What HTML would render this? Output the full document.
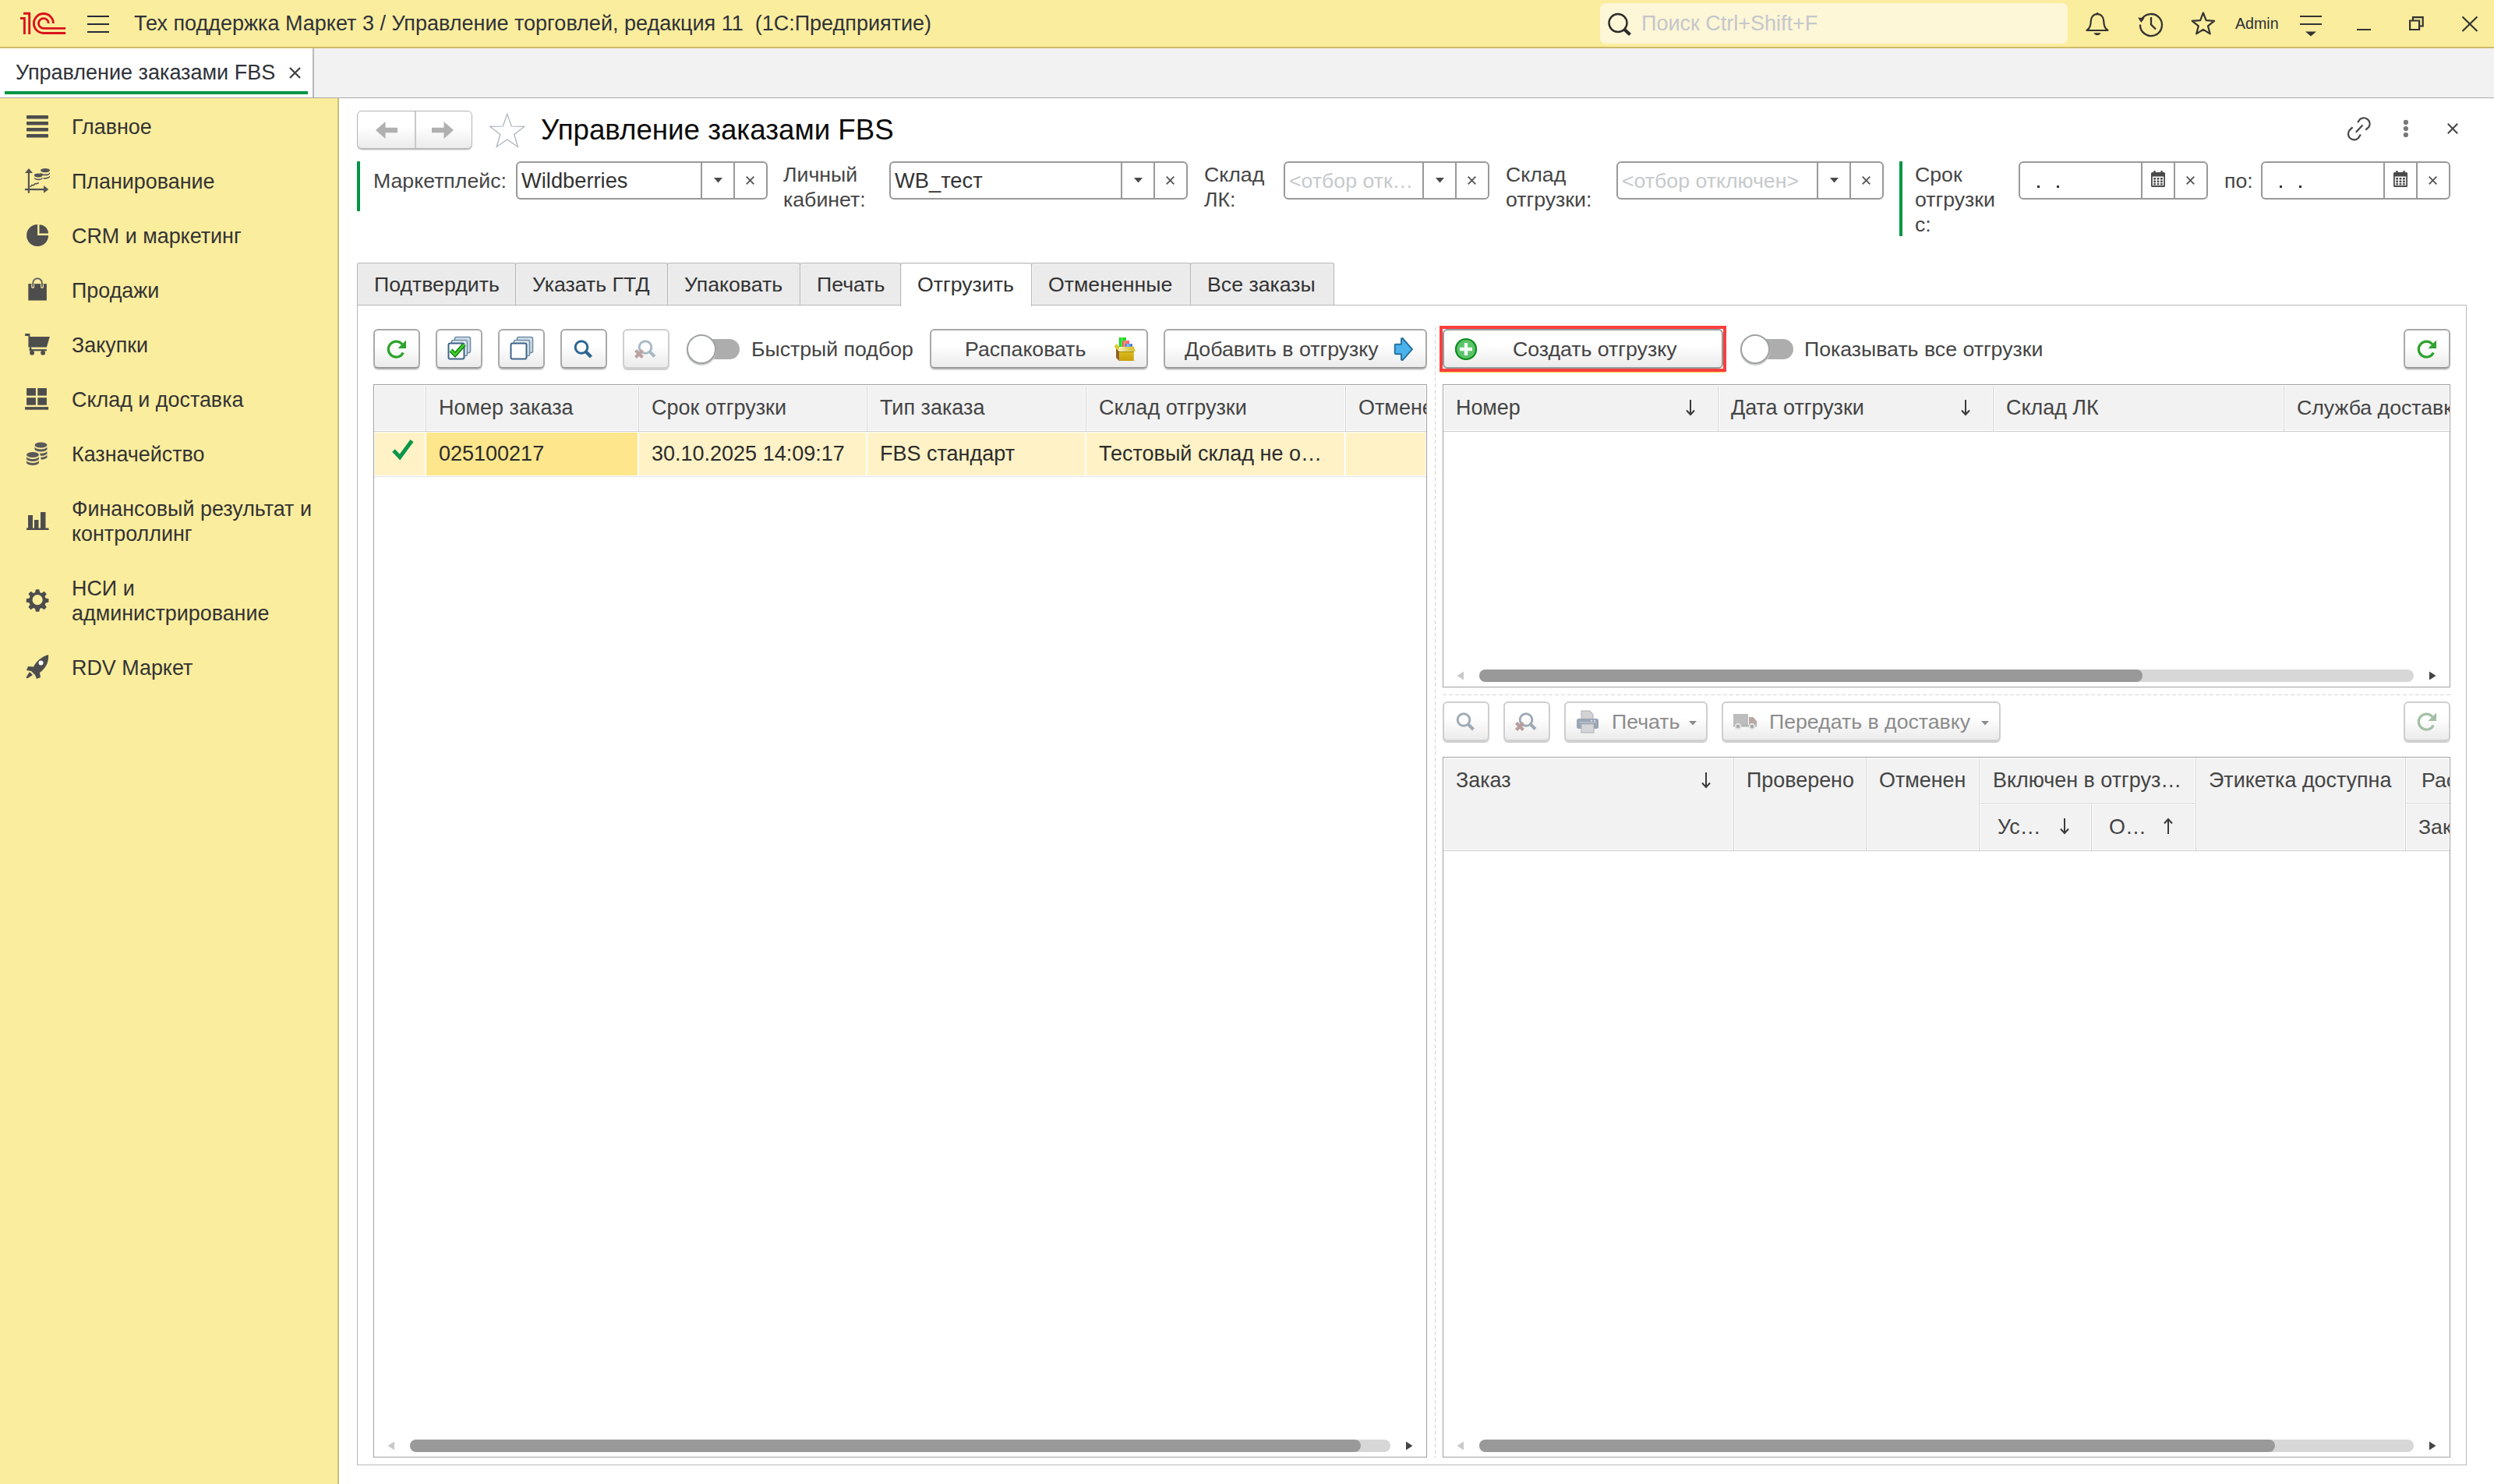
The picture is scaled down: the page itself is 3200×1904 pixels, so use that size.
<!DOCTYPE html>
<html lang="ru">
<head>
<meta charset="utf-8">
<title>Управление заказами FBS</title>
<style>
*{box-sizing:border-box}
html,body{margin:0;padding:0;overflow:hidden}
body{width:3200px;height:1904px;overflow:hidden;position:relative;background:#fff;font-family:"Liberation Sans",sans-serif;font-size:26.7px;color:#333;line-height:32px}
.a{position:absolute}
.t{position:absolute;white-space:nowrap;line-height:32px}
svg{position:absolute;overflow:visible}
#titlebar{left:0;top:0;width:3200px;height:60px;background:#fbed9e}
#titleline{left:0;top:60px;width:3200px;height:2px;background:#cdbb6a}
#tabbar{left:0;top:62px;width:3200px;height:63px;background:#f2f2f2}
#tabbarline{left:0;top:125px;width:3200px;height:1px;background:#a9a9a9}
#sidebar{left:0;top:126px;width:435px;height:1778px;background:#fbed9e;border-right:2px solid #cdbf78}
.nav{position:absolute;left:92px;white-space:nowrap;line-height:32px;color:#333;font-size:26.9px;margin-top:1px}
.btn{position:absolute;height:51px;border:2px solid #a9a9a9;border-bottom-color:#969696;border-radius:6px;background:linear-gradient(#ffffff,#ffffff 40%,#ebebeb);box-shadow:0 2px 0 #d4d4d4}
.btn.dis{border-color:#cecece;box-shadow:0 2px 0 #d0d0d0;color:#9a9a9a}
.inp{position:absolute;height:49px;border:2px solid #999;border-radius:6px;background:#fff}
.inp i{position:absolute;top:0;width:2px;height:45px;background:#999}
.ph{color:#c6c9cc}
.tab{position:absolute;top:337px;height:54px;border:1px solid #b4b4b4;box-shadow:inset 1px 1px 0 #f1f1f1;border-bottom:none;background:#ebebeb;border-radius:3px 3px 0 0}
.grid{position:absolute;border:1px solid #a0a0a0;background:#fff}
.hd{position:absolute;background:#f2f2f2}
.vl{position:absolute;width:3px;background:#cdcdcd;border-left:1px solid #fff;border-right:1px solid #fff}
.hl{position:absolute;height:3px;background:#cdcdcd;border-top:1px solid #fff;border-bottom:1px solid #fff}
.sbtrack{position:absolute;height:16px;border-radius:8px;background:#d7d7d7}
.sbthumb{position:absolute;height:16px;border-radius:8px;background:#999}
.tog{position:absolute;width:68px;height:36px}
.tog b{position:absolute;left:10px;top:6px;width:58px;height:26px;border-radius:13px;background:#adadad}
.tog u{position:absolute;left:0;top:0;width:38px;height:38px;border-radius:19px;background:#fff;border:2px solid #9da2a1;box-shadow:0 2px 1px #cfcfcf}
</style>
</head>
<body>
<!-- TITLE BAR -->
<div class="a" id="titlebar"></div>
<div class="a" id="titleline"></div>
<div class="a" id="tabbar"></div>
<div class="a" id="tabbarline"></div>
<div class="a" id="sidebar"></div>
<!-- 1C logo -->
<svg class="a" style="left:0;top:0" width="170" height="60" viewBox="0 0 170 60" fill="none" stroke="#d9131c" stroke-width="2.9">
<path d="M26 23.5H31.4V43.9"/>
<path d="M30 17.3H37.7V43.9"/>
<path d="M68.4 30A12.5 12.5 0 1 0 55.9 42.5H84.1"/>
<path d="M62.3 30A6.4 6.4 0 1 0 55.9 36.4H84.1"/>
</svg>
<div class="a" style="left:112px;top:20px;width:28px;height:2px;background:#252a35"></div>
<div class="a" style="left:112px;top:30px;width:28px;height:2px;background:#252a35"></div>
<div class="a" style="left:112px;top:40px;width:28px;height:2px;background:#252a35"></div>
<div class="t" style="left:172px;top:14px;font-size:27px;color:#2f3238;white-space:pre">Тех поддержка Маркет 3 / Управление торговлей, редакция 11  (1С:Предприятие)</div>
<!-- search -->
<div class="a" style="left:2053px;top:4px;width:600px;height:52px;border-radius:7px;background:#fdf6d7"></div>
<svg class="a" style="left:2060px;top:14px" width="36" height="36" viewBox="0 0 36 36" fill="none" stroke="#2b2b2b"><circle cx="16" cy="15.5" r="11.5" stroke-width="2.4"/><path d="M24.5 24l7 6.5" stroke-width="4.2"/></svg>
<div class="t" style="left:2106px;top:14px;font-size:27px;color:#c4c7cb">Поиск Ctrl+Shift+F</div>
<!-- bell -->
<svg class="a" style="left:2675px;top:14px" width="32" height="34" viewBox="0 0 32 34" fill="none" stroke="#333" stroke-width="2.2" stroke-linejoin="round">
<path d="M16 4.2c-5.2 0-8.3 4-8.3 9.2 0 5.800-2.200 9.500-5.200 11.600h27c-3-2.100-5.200-5.800-5.200-11.600 0-5.200-3.100-9.200-8.300-9.200z"/>
<circle cx="16" cy="3.200" r="1.300" fill="#333" stroke="none"/>
<path d="M11.500 28.300c1 2.200 2.600 3 4.500 3s3.500-.8 4.500-3z" fill="#333" stroke="none"/>
</svg>
<!-- history -->
<svg class="a" style="left:2742px;top:13px" width="36" height="36" viewBox="0 0 36 36" fill="none" stroke="#333" stroke-width="2.3">
<path d="M5.600 12.500A14 14 0 1 1 4 18.500"/>
<path d="M1.200 9.500l8.300 .800-4.200 5.700z" fill="#333" stroke="none"/>
<path d="M18 9v9.500l6 6" stroke-width="2.300"/>
</svg>
<!-- star -->
<svg class="a" style="left:2810px;top:13px" width="34" height="34" viewBox="0 0 34 34" fill="none" stroke="#333" stroke-width="2.200" stroke-linejoin="round"><path d="M16.90 3.50L20.66 13.22L31.07 13.80L22.99 20.38L25.66 30.45L16.90 24.80L8.14 30.45L10.81 20.38L2.73 13.80L13.14 13.22z"/></svg>
<div class="t" style="left:2868px;top:14px;font-size:19.600px;color:#2b2f36">Admin</div>
<!-- settings lines -->
<div class="a" style="left:2951px;top:20px;width:28px;height:2px;background:#333"></div>
<div class="a" style="left:2951px;top:30px;width:28px;height:2px;background:#333"></div>
<svg class="a" style="left:2957px;top:40px" width="16" height="8" viewBox="0 0 16 8"><path d="M1 .5h14l-7 6z" fill="#333"/></svg>
<!-- window buttons -->
<div class="a" style="left:3024px;top:37px;width:18px;height:2px;background:#333"></div>
<svg class="a" style="left:3090px;top:20px" width="22" height="20" viewBox="0 0 22 20" fill="none" stroke="#333" stroke-width="2.2"><path d="M2.100 6.500h12v11.500h-12z"/><path d="M6 6.500v-4.300h12.700v11.300h-4.600"/></svg>
<svg class="a" style="left:3158px;top:20px" width="22" height="22" viewBox="0 0 22 22" fill="none" stroke="#333" stroke-width="2.2"><path d="M1.500 1.500l19 18.500M20.500 1.500l-19 18.500"/></svg>
<!-- open tab -->
<div class="a" style="left:0;top:62px;width:403px;height:63px;background:#fff;border-right:2px solid #b8b8b8"></div>
<div class="t" style="left:20px;top:77px;font-size:27px;color:#2f3238">Управление заказами FBS</div>
<svg class="a" style="left:371px;top:86px" width="15" height="15" viewBox="0 0 15 15" stroke="#444" stroke-width="2.400" fill="none"><path d="M1 1l13 13M14 1L1 14"/></svg>
<div class="a" style="left:6px;top:117px;width:389px;height:4px;background:#009646"></div>

<!-- sidebar icons -->
<svg class="a" style="left:32px;top:146px" width="32" height="32" viewBox="0 0 32 32" fill="#4d4d4d"><rect x="2" y="2" width="28" height="4.500" rx="1"/><rect x="2" y="10" width="28" height="4.500" rx="1"/><rect x="2" y="18" width="28" height="4.500" rx="1"/><rect x="2" y="26" width="28" height="4.500" rx="1"/></svg>
<svg class="a" style="left:32px;top:216px" width="32" height="32" viewBox="0 0 32 32" fill="#545454" stroke="none">
<rect x="3.800" y="3" width="2.200" height="28.700"/><path d="M0 5.900h10l-5-5.900z"/>
<rect x="0" y="25.900" width="26" height="2.300"/><path d="M24 22.100l6.300 4.900-6.300 4.700z"/>
<path d="M6.500 24l2.600-2.600 1.900.3 2.200-2.100 1.900.2 2.700-1.300" fill="none" stroke="#545454" stroke-width="1.500"/>
<ellipse cx="26" cy="2.600" rx="6" ry="2.600"/><path d="M20 5.200c.8 1.600 3.200 2.300 6 2.300s5.200-.7 6-2.300v1.700c-.8 1.600-3.200 2.300-6 2.300s-5.200-.7-6-2.300z"/><path d="M23.500 11.900c3.300.5 7.400-.2 8.500-2.300v1.700c-1.100 1.900-5 2.700-8.500 2.300z"/>
<ellipse cx="17.300" cy="9" rx="5.300" ry="2.400"/><path d="M12 11.500c.8 1.500 2.900 2.100 5.300 2.100s4.500-.6 5.300-2.100v1.600c-.8 1.500-2.900 2.100-5.300 2.100s-4.500-.6-5.300-2.100z"/>
</svg>
<svg class="a" style="left:32px;top:286px" width="32" height="32" viewBox="0 0 32 32" fill="#4f4f4f"><path d="M16.100 16V2A14 14 0 1 0 30.100 16z"/><path d="M18.500 13.600V2.200A11.600 11.600 0 0 1 30 13.600z"/></svg>
<svg class="a" style="left:32px;top:356px" width="32" height="32" viewBox="0 0 32 32"><rect x="4.300" y="8.100" width="23.600" height="21.400" fill="#4d4d4d"/><rect x="8.200" y="7.500" width="3.900" height="6.300" rx="1.900" fill="#fbed9e"/><rect x="20.100" y="7.500" width="3.900" height="6.300" rx="1.900" fill="#fbed9e"/><path d="M10.200 12.300V7.200a5.900 5.900 0 0 1 11.800 0v5.100" fill="none" stroke="#666" stroke-width="2"/></svg>
<svg class="a" style="left:32px;top:426px" width="32" height="32" viewBox="0 0 32 32" fill="#4d4d4d"><path d="M.1 2h6.300v3.900h25.400l-3.900 13.600h-23.500v-14.500h-4.300z"/><rect x="5.800" y="19.500" width="2.600" height="4.800"/><rect x="5.800" y="22.100" width="22.100" height="2.200"/><circle cx="9.100" cy="26.700" r="2.900"/><circle cx="23.100" cy="26.700" r="2.900"/></svg>
<svg class="a" style="left:32px;top:496px" width="32" height="32" viewBox="0 0 32 32" fill="#4d4d4d"><rect x="2.100" y="2" width="11.800" height="9.600"/><rect x="16.300" y="2" width="11.600" height="9.600"/><rect x="2.100" y="14.200" width="11.800" height="9.500"/><rect x="16.300" y="14.200" width="11.600" height="9.500"/><rect x=".100" y="26.100" width="30" height="3.600"/></svg>
<svg class="a" style="left:32px;top:566px" width="32" height="32" viewBox="0 0 32 32" fill="#5a5a5a">
<ellipse cx="20.500" cy="5" rx="8" ry="3.500"/><path d="M12.500 7.500c1.500 2.300 4.500 3 8 3s6.500-.7 8-3v3c-1.500 2.300-4.500 3-8 3s-6.500-.7-8-3z"/><path d="M19 15.500c3.500.6 8-.3 9.500-2.500v3c-1.200 2-4.500 3-8.500 2.800z"/><path d="M20.500 20.500c3.500 0 6.500-.8 8-2.800v3c-1.300 2-4.500 2.900-8 2.800z"/>
<ellipse cx="10" cy="17.500" rx="8" ry="3.500"/><path d="M2 20c1.500 2.300 4.500 3 8 3s6.500-.7 8-3v3c-1.500 2.300-4.500 3-8 3s-6.500-.7-8-3z"/><path d="M2 25c1.500 2.300 4.500 3 8 3s6.500-.7 8-3v3c-1.500 2.300-4.500 3-8 3s-6.500-.7-8-3z"/>
</svg>
<svg class="a" style="left:32px;top:652px" width="32" height="32" viewBox="0 0 32 32" fill="#4d4d4d"><rect x="4" y="9" width="6" height="17"/><rect x="12" y="15" width="5.500" height="11"/><rect x="20" y="5" width="6.500" height="21"/><rect x="2" y="25.500" width="28.500" height="2.500"/></svg>
<svg class="a" style="left:32px;top:754px" width="32" height="32" viewBox="0 0 32 32" fill="#4d4d4d"><path fill-rule="evenodd" d="M13.500 1.500h5l.8 4.200 2.600 1.100 3.600-2.400 3.500 3.500-2.400 3.600 1.100 2.600 4.200.8v5l-4.200.8-1.100 2.600 2.400 3.600-3.500 3.500-3.600-2.400-2.600 1.100-.8 4.200h-5l-.8-4.200-2.600-1.100-3.600 2.400-3.500-3.500 2.400-3.600-1.100-2.600-4.200-.8v-5l4.200-.8 1.100-2.600-2.400-3.600 3.500-3.500 3.600 2.400 2.600-1.100zM16 9.200a7.300 7.300 0 1 0 0 14.600 7.300 7.300 0 0 0 0-14.600z" transform="translate(1.700 .800) scale(.9)"/></svg>
<svg class="a" style="left:32px;top:840px" width="32" height="32" viewBox="0 0 32 32" fill="#4d4d4d"><path d="M30 0c1 9-3 17-11 23l1 6-5 2-2-5-5-5-6-1 2-5 7 .5c4-8 11-13 19-15.500z"/><path d="M6 22l4 4-7 4.500-1.500-1.500z"/><circle cx="20.500" cy="10.500" r="3" fill="#fff"/></svg>
<!-- sidebar labels -->
<div class="nav" style="top:146px">Главное</div>
<div class="nav" style="top:216px">Планирование</div>
<div class="nav" style="top:286px">CRM и маркетинг</div>
<div class="nav" style="top:356px">Продажи</div>
<div class="nav" style="top:426px">Закупки</div>
<div class="nav" style="top:496px">Склад и доставка</div>
<div class="nav" style="top:566px">Казначейство</div>
<div class="nav" style="top:636px">Финансовый результат и<br>контроллинг</div>
<div class="nav" style="top:738px">НСИ и<br>администрирование</div>
<div class="nav" style="top:840px">RDV Маркет</div>

<!-- nav buttons -->
<div class="a" style="left:458px;top:142px;width:148px;height:49px;border:1px solid #b3b3b3;border-radius:6px;background:linear-gradient(#fff,#fff 40%,#ebebeb);box-shadow:0 1.500px 0 #c4c4c4"></div>
<div class="a" style="left:532px;top:143px;width:1.500px;height:47px;background:#c9c9c9"></div>
<svg class="a" style="left:482px;top:156px" width="29" height="22" viewBox="0 0 29 22" fill="#b0b0b0"><path d="M0 11l12.500-11v7.700h15.500v6.600h-15.500v7.700z"/></svg>
<svg class="a" style="left:554px;top:156px" width="29" height="22" viewBox="0 0 29 22" fill="#b0b0b0"><path d="M28 11l-12.500-11v7.700h-15.500v6.600h15.500v7.700z"/></svg>
<!-- star -->
<svg class="a" style="left:626px;top:144px" width="50" height="48" viewBox="0 0 50 48" fill="none" stroke="#a7afb8" stroke-width="1.200"><path d="M24.80 2.40L30.33 18.00L46.86 18.43L33.74 28.50L38.44 44.37L24.80 35.00L11.16 44.37L15.86 28.50L2.74 18.43L19.27 18.00z"/></svg>
<div class="t" style="left:694px;top:146px;font-size:36.700px;line-height:42px;color:#0b0b0b">Управление заказами FBS</div>
<!-- link, more, close -->
<svg class="a" style="left:3010px;top:148px" width="34" height="34" viewBox="0 0 34 34" fill="none" stroke="#444" stroke-width="2.200"><path d="M15 9.100L18.300 4.900A7.600 7.600 0 0 1 29.300 15.100L25.300 18.600"/><path d="M8.600 15.200L4.600 19.100A7.600 7.600 0 0 0 15.600 29.500L18.900 24.700"/><path d="M12.800 21.700L21.500 12.500"/></svg>
<svg class="a" style="left:3082px;top:152px" width="10" height="26" viewBox="0 0 10 26" fill="#777"><circle cx="4.900" cy="4.900" r="3.100"/><circle cx="4.900" cy="13" r="3.100"/><circle cx="4.900" cy="21" r="3.100"/></svg>
<svg class="a" style="left:3140px;top:158px" width="14" height="14" viewBox="0 0 14 14" fill="none" stroke="#444" stroke-width="2"><path d="M.8 .8l12.400 12.400M13.200 .8L.8 13.200"/></svg>

<!-- filters -->
<div class="a" style="left:458px;top:207px;width:4px;height:64px;background:#009646"></div>
<div class="t" style="left:479px;top:216px;color:#454545">Маркетплейс:</div>
<div class="inp" style="left:662px;top:207px;width:323px"><i style="left:235px"></i><i style="left:277px"></i></div>
<div class="t" style="left:669px;top:216px;font-size:27.300px">Wildberries</div>
<div class="t" style="left:1005px;top:208px;color:#454545">Личный<br>кабинет:</div>
<div class="inp" style="left:1141px;top:207px;width:383px"><i style="left:295px"></i><i style="left:337px"></i></div>
<div class="t" style="left:1148px;top:216px;font-size:27.300px">WB_тест</div>
<div class="t" style="left:1545px;top:208px;color:#454545">Склад<br>ЛК:</div>
<div class="inp" style="left:1647px;top:207px;width:264px"><i style="left:176px"></i><i style="left:218px"></i></div>
<div class="t ph" style="left:1654px;top:216px">&lt;отбор отк…</div>
<div class="t" style="left:1932px;top:208px;color:#454545">Склад<br>отгрузки:</div>
<div class="inp" style="left:2074px;top:207px;width:343px"><i style="left:255px"></i><i style="left:297px"></i></div>
<div class="t ph" style="left:2081px;top:216px">&lt;отбор отключен&gt;</div>
<div class="a" style="left:2437px;top:207px;width:4px;height:96px;background:#009646"></div>
<div class="t" style="left:2457px;top:208px;color:#454545">Срок<br>отгрузки<br>с:</div>
<div class="inp" style="left:2590px;top:207px;width:243px"><i style="left:155px"></i><i style="left:197px"></i></div>
<div class="t" style="left:2854px;top:216px;color:#454545">по:</div>
<div class="inp" style="left:2901px;top:207px;width:243px"><i style="left:155px"></i><i style="left:197px"></i></div>
<!-- date dots -->
<div class="a" style="left:2614px;top:238px;width:3px;height:3px;background:#333"></div><div class="a" style="left:2639px;top:238px;width:3px;height:3px;background:#333"></div>
<div class="a" style="left:2925px;top:238px;width:3px;height:3px;background:#333"></div><div class="a" style="left:2950px;top:238px;width:3px;height:3px;background:#333"></div>
<!-- dropdown triangles -->
<svg class="a" style="left:916px;top:228px" width="11" height="7" viewBox="0 0 11 7"><path d="M0 0h11l-5.500 6.500z" fill="#4a4a4a"/></svg>
<svg class="a" style="left:1455px;top:228px" width="11" height="7" viewBox="0 0 11 7"><path d="M0 0h11l-5.500 6.500z" fill="#4a4a4a"/></svg>
<svg class="a" style="left:1842px;top:228px" width="11" height="7" viewBox="0 0 11 7"><path d="M0 0h11l-5.500 6.500z" fill="#4a4a4a"/></svg>
<svg class="a" style="left:2348px;top:228px" width="11" height="7" viewBox="0 0 11 7"><path d="M0 0h11l-5.500 6.500z" fill="#4a4a4a"/></svg>
<!-- clear crosses -->
<svg class="a" style="left:957px;top:226px" width="11" height="11" viewBox="0 0 11 11" fill="none" stroke="#555" stroke-width="1.800"><path d="M.7 .7l9.600 9.600M10.300 .7L.7 10.300"/></svg>
<svg class="a" style="left:1496px;top:226px" width="11" height="11" viewBox="0 0 11 11" fill="none" stroke="#555" stroke-width="1.800"><path d="M.7 .7l9.600 9.600M10.300 .7L.7 10.300"/></svg>
<svg class="a" style="left:1883px;top:226px" width="11" height="11" viewBox="0 0 11 11" fill="none" stroke="#555" stroke-width="1.800"><path d="M.7 .7l9.600 9.600M10.300 .7L.7 10.300"/></svg>
<svg class="a" style="left:2389px;top:226px" width="11" height="11" viewBox="0 0 11 11" fill="none" stroke="#555" stroke-width="1.800"><path d="M.7 .7l9.600 9.600M10.300 .7L.7 10.300"/></svg>
<svg class="a" style="left:2805px;top:226px" width="11" height="11" viewBox="0 0 11 11" fill="none" stroke="#555" stroke-width="1.800"><path d="M.7 .7l9.600 9.600M10.300 .7L.7 10.300"/></svg>
<svg class="a" style="left:3116px;top:226px" width="11" height="11" viewBox="0 0 11 11" fill="none" stroke="#555" stroke-width="1.800"><path d="M.7 .7l9.600 9.600M10.300 .7L.7 10.300"/></svg>
<!-- calendars -->
<svg class="a" style="left:2760px;top:219px" width="18" height="21" viewBox="0 0 18 21" fill="#4a4a4a"><path d="M0 3.500a1.500 1.500 0 0 1 1.500-1.500h15a1.500 1.500 0 0 1 1.500 1.500v16a1.500 1.500 0 0 1-1.500 1.500h-15a1.500 1.500 0 0 1-1.500-1.500z"/><rect x="3.300" y="0" width="2.300" height="4" /><rect x="12.400" y="0" width="2.300" height="4"/><rect x="1.800" y="7.500" width="14.400" height="11.500" fill="#fff"/><g><rect x="3.200" y="9" width="2.800" height="2.500"/><rect x="7.600" y="9" width="2.800" height="2.500"/><rect x="12" y="9" width="2.800" height="2.500"/><rect x="3.200" y="12.600" width="2.800" height="2.500"/><rect x="7.600" y="12.600" width="2.800" height="2.500"/><rect x="12" y="12.600" width="2.800" height="2.500"/><rect x="3.200" y="16.100" width="2.800" height="2.200"/><rect x="7.600" y="16.100" width="2.800" height="2.200"/><rect x="12" y="16.100" width="2.800" height="2.200"/></g></svg>
<svg class="a" style="left:3071px;top:219px" width="18" height="21" viewBox="0 0 18 21" fill="#4a4a4a"><path d="M0 3.500a1.500 1.500 0 0 1 1.500-1.500h15a1.500 1.500 0 0 1 1.500 1.500v16a1.500 1.500 0 0 1-1.500 1.500h-15a1.500 1.500 0 0 1-1.500-1.500z"/><rect x="3.300" y="0" width="2.300" height="4" /><rect x="12.400" y="0" width="2.300" height="4"/><rect x="1.800" y="7.500" width="14.400" height="11.500" fill="#fff"/><g><rect x="3.200" y="9" width="2.800" height="2.500"/><rect x="7.600" y="9" width="2.800" height="2.500"/><rect x="12" y="9" width="2.800" height="2.500"/><rect x="3.200" y="12.600" width="2.800" height="2.500"/><rect x="7.600" y="12.600" width="2.800" height="2.500"/><rect x="12" y="12.600" width="2.800" height="2.500"/><rect x="3.200" y="16.100" width="2.800" height="2.200"/><rect x="7.600" y="16.100" width="2.800" height="2.200"/><rect x="12" y="16.100" width="2.800" height="2.200"/></g></svg>

<!-- tab panel frame -->
<div class="a" style="left:458px;top:391px;width:2707px;height:1489px;border:1.500px solid #b9b9b9"></div>
<!-- tabs -->
<div class="tab" style="left:458px;width:204px"></div>
<div class="tab" style="left:661px;width:196px"></div>
<div class="tab" style="left:856px;width:171px"></div>
<div class="tab" style="left:1026px;width:130px"></div>
<div class="tab" style="left:1323px;width:205px"></div>
<div class="tab" style="left:1527px;width:185px"></div>
<div class="tab" style="left:1155px;width:169px;background:#fff;height:56px;border-color:#b9b9b9"></div>
<div class="t" style="left:480px;top:349px">Подтвердить</div>
<div class="t" style="left:683px;top:349px">Указать ГТД</div>
<div class="t" style="left:878px;top:349px">Упаковать</div>
<div class="t" style="left:1048px;top:349px">Печать</div>
<div class="t" style="left:1177px;top:349px">Отгрузить</div>
<div class="t" style="left:1345px;top:349px">Отмененные</div>
<div class="t" style="left:1549px;top:349px">Все заказы</div>

<!-- left toolbar -->
<div class="btn" style="left:479px;top:422px;width:60px"></div>
<div class="btn" style="left:559px;top:422px;width:60px"></div>
<div class="btn" style="left:639px;top:422px;width:60px"></div>
<div class="btn" style="left:719px;top:422px;width:60px"></div>
<div class="btn dis" style="left:799px;top:422px;width:60px"></div>
<!-- refresh icon -->
<svg class="a" style="left:495px;top:434px" width="28" height="28" viewBox="0 0 28 28" fill="none"><path d="M22.300 18.500a10 10 0 1 1-1.300-10.800" stroke="#2ea32e" stroke-width="3.200"/><path d="M26 2.500v10.500h-10.500z" fill="#2ea32e"/></svg>
<!-- check all -->
<svg class="a" style="left:574px;top:431px" width="32" height="32" viewBox="0 0 32 32"><rect x="9.500" y="1.500" width="20" height="20" rx="2" fill="#d3dfe8" stroke="#6f8ca6" stroke-width="1.600"/><rect x="5.500" y="5.500" width="20" height="20" rx="2" fill="#dfe8ee" stroke="#6f8ca6" stroke-width="1.600"/><rect x="1.500" y="9.500" width="20" height="20" rx="2" fill="#fff" stroke="#3f6588" stroke-width="2"/><path d="M4.500 18.500l5.500 5.500 11.500-13" fill="none" stroke="#0f7a12" stroke-width="5.400"/><path d="M4.500 18.500l5.500 5.500 11.500-13" fill="none" stroke="#3fd42a" stroke-width="2.600"/></svg>
<!-- uncheck all -->
<svg class="a" style="left:654px;top:431px" width="32" height="32" viewBox="0 0 32 32"><rect x="9.500" y="1.500" width="20" height="20" rx="2" fill="#d3dfe8" stroke="#6f8ca6" stroke-width="1.600"/><rect x="5.500" y="5.500" width="20" height="20" rx="2" fill="#dfe8ee" stroke="#6f8ca6" stroke-width="1.600"/><rect x="1.500" y="9.500" width="20" height="20" rx="2" fill="#fff" stroke="#3f6588" stroke-width="2"/></svg>
<!-- find -->
<svg class="a" style="left:735px;top:435px" width="26" height="26" viewBox="0 0 26 26" fill="none" stroke="#2a6692"><circle cx="11" cy="10.500" r="7.800" stroke-width="3"/><path d="M16.500 16l7 7" stroke-width="4.200"/></svg>
<!-- cancel find -->
<svg class="a" style="left:812px;top:435px" width="30" height="28" viewBox="0 0 30 28" fill="none"><circle cx="16" cy="10.500" r="7.800" stroke="#a9b9c6" stroke-width="3"/><path d="M21.500 16l6.500 6.500" stroke="#a9b9c6" stroke-width="4"/><path d="M3.500 14.500l9 9M12.500 14.500l-9 9" stroke="#bda1a1" stroke-width="4.200"/></svg>
<!-- toggle -->
<div class="tog" style="left:881px;top:429px"><b></b><u></u></div>
<div class="t" style="left:964px;top:432px;color:#444">Быстрый подбор</div>
<div class="btn" style="left:1193px;top:422px;width:280px"></div>
<div class="t" style="left:1238px;top:432px;color:#444">Распаковать</div>
<div class="btn" style="left:1493px;top:422px;width:338px"></div>
<div class="t" style="left:1520px;top:432px;color:#444">Добавить в отгрузку</div>
<!-- box icon -->
<svg class="a" style="left:1428px;top:432px" width="30" height="32" viewBox="0 0 30 32">
<defs><linearGradient id="gbx" x1="0" y1="0" x2="0" y2="1"><stop offset="0" stop-color="#dcbd1e"/><stop offset="1" stop-color="#c8a00b"/></linearGradient><linearGradient id="gfl" x1="0" y1="0" x2="1" y2="0"><stop offset="0" stop-color="#fbf3c0"/><stop offset=".55" stop-color="#e3d057"/><stop offset="1" stop-color="#d4be20"/></linearGradient><linearGradient id="ggr" x1="0" y1="0" x2="1" y2="0"><stop offset="0" stop-color="#09c011"/><stop offset=".35" stop-color="#45f245"/><stop offset="1" stop-color="#0bc418"/></linearGradient><linearGradient id="gpk" x1="0" y1="0" x2="1" y2="0"><stop offset="0" stop-color="#f83a7a"/><stop offset=".3" stop-color="#ff9a6a"/><stop offset="1" stop-color="#f24b78"/></linearGradient><linearGradient id="gbl" x1="0" y1="0" x2="1" y2="0"><stop offset="0" stop-color="#3a49d8"/><stop offset=".3" stop-color="#73d6ff"/><stop offset="1" stop-color="#3a4fd6"/></linearGradient></defs>
<rect x="7.900" y="1" width="8.900" height="12" fill="url(#ggr)"/>
<rect x="12.200" y="5" width="8.700" height="8" fill="url(#gpk)"/>
<rect x="16.100" y="9.100" width="8.700" height="4" fill="url(#gbl)"/>
<path d="M4 14.500v12.500l4.300 4.500v-12.500z" fill="#94601f"/>
<path d="M1.600 12.800l3-3.700 3.700 4.100-1.500 4.800z" fill="#dccb2c"/>
<rect x="8.300" y="18.800" width="18.500" height="12.200" fill="url(#gbx)"/>
<path d="M8.700 13.200l17.800-.7 2.500 6.300h-21z" fill="url(#gfl)"/>
<path d="M8 18.800h18.800v1.200h-18.800z" fill="#7a6a10" opacity=".55"/>
</svg>
<!-- arrow icon -->
<svg class="a" style="left:1788px;top:431px" width="26" height="32" viewBox="0 0 26 32"><path d="M2.900 10.800h7.100v-7.300l1.600-.5 12.400 14.100-12.400 14-1.600-.5v-7.300h-7.100a1.200 1.200 0 0 1-1.200-1.200v-10.100a1.200 1.200 0 0 1 1.200-1.200z" fill="#4ab3ee" stroke="#276f9a" stroke-width="1.900" stroke-linejoin="round"/></svg>
<!-- left grid -->
<div class="grid" style="left:479px;top:493px;width:1352px;height:1377px"></div>
<div class="hd" style="left:481px;top:495px;width:1348px;height:57px"></div>
<div class="hl" style="left:480px;top:552px;width:1350px"></div>
<div class="a" style="left:481px;top:555px;width:1348px;height:55px;background:#fff2c6"></div>
<div class="a" style="left:547px;top:555px;width:271px;height:55px;background:#fde68c"></div>
<div class="a" style="left:480px;top:611px;width:1350px;height:1px;background:#e4e4e4"></div>
<div class="vl" style="left:545px;top:495px;height:58px"></div>
<div class="vl" style="left:818px;top:495px;height:58px"></div>
<div class="vl" style="left:1111px;top:495px;height:58px"></div>
<div class="vl" style="left:1392px;top:495px;height:58px"></div>
<div class="vl" style="left:1725px;top:495px;height:58px"></div>
<div class="a" style="left:545px;top:555px;width:2px;height:55px;background:#fff"></div>
<div class="a" style="left:818px;top:555px;width:2px;height:55px;background:#fff"></div>
<div class="a" style="left:1111px;top:555px;width:2px;height:55px;background:#fff"></div>
<div class="a" style="left:1392px;top:555px;width:2px;height:55px;background:#fff"></div>
<div class="a" style="left:1725px;top:555px;width:2px;height:55px;background:#fff"></div>
<div class="t" style="left:563px;top:507px;font-size:27px;color:#444">Номер заказа</div>
<div class="t" style="left:836px;top:507px;font-size:27px;color:#444">Срок отгрузки</div>
<div class="t" style="left:1129px;top:507px;font-size:27px;color:#444">Тип заказа</div>
<div class="t" style="left:1410px;top:507px;font-size:27px;color:#444">Склад отгрузки</div>
<div class="a" style="left:1743px;top:507px;width:87px;height:32px;overflow:hidden"><div class="t" style="left:0;top:0;font-size:27px;color:#444">Отмененный</div></div>
<svg class="a" style="left:503px;top:564px" width="28" height="26" viewBox="0 0 28 26" fill="none" stroke="#0a9648" stroke-width="5" stroke-linejoin="miter"><path d="M2 14l8 8.500 15.500-21"/></svg>
<div class="t" style="left:563px;top:566px;font-size:27px;color:#2b2b2b">025100217</div>
<div class="t" style="left:836px;top:566px;font-size:27px;color:#2b2b2b">30.10.2025 14:09:17</div>
<div class="t" style="left:1129px;top:566px;font-size:27px;color:#2b2b2b">FBS стандарт</div>
<div class="t" style="left:1410px;top:566px;font-size:27px;color:#2b2b2b">Тестовый склад не о…</div>
<!-- left scrollbar -->
<svg class="a" style="left:497px;top:1849px" width="10" height="12" viewBox="0 0 10 12"><path d="M9 .5v11l-8.500-5.500z" fill="#c9c9c9"/></svg>
<div class="sbtrack" style="left:526px;top:1847px;width:1258px"></div>
<div class="sbthumb" style="left:526px;top:1847px;width:1220px"></div>
<svg class="a" style="left:1803px;top:1849px" width="10" height="12" viewBox="0 0 10 12"><path d="M1 .5v11l8.500-5.500z" fill="#444"/></svg>
<!-- splitter -->
<div class="a" style="left:1841px;top:420px;width:1px;height:1450px;background:repeating-linear-gradient(180deg,#d4d4d4 0,#d4d4d4 5px,transparent 5px,transparent 8px)"></div>

<!-- right top toolbar -->
<div class="a" style="left:1847px;top:418px;width:368px;height:59px;border:4px solid #fa3e3e"></div>
<div class="btn" style="left:1851px;top:422px;width:360px;border-color:#929d9b;box-shadow:none"></div><div class="a" style="left:1847px;top:477px;width:366px;height:1px;background:#f9cf3a"></div>
<svg class="a" style="left:1866px;top:433px" width="30" height="30" viewBox="0 0 30 30"><circle cx="15" cy="15" r="13" fill="#5bc469" stroke="#0b8c1c" stroke-width="2.200"/><path d="M15 7v16M7 15h16" stroke="#f4fbf4" stroke-width="4.400" fill="none"/></svg>
<div class="t" style="left:1941px;top:432px;color:#444">Создать отгрузку</div>
<div class="tog" style="left:2233px;top:429px"><b></b><u></u></div>
<div class="t" style="left:2315px;top:432px;color:#444">Показывать все отгрузки</div>
<div class="btn" style="left:3084px;top:422px;width:60px"></div>
<svg class="a" style="left:3100px;top:434px" width="28" height="28" viewBox="0 0 28 28" fill="none"><path d="M22.300 18.500a10 10 0 1 1-1.300-10.800" stroke="#2ea32e" stroke-width="3.200"/><path d="M26 2.500v10.500h-10.500z" fill="#2ea32e"/></svg>
<!-- right top grid -->
<div class="grid" style="left:1851px;top:493px;width:1293px;height:389px"></div>
<div class="hd" style="left:1853px;top:495px;width:1289px;height:57px"></div>
<div class="hl" style="left:1852px;top:552px;width:1291px"></div>
<div class="vl" style="left:2203px;top:495px;height:58px"></div>
<div class="vl" style="left:2556px;top:495px;height:58px"></div>
<div class="vl" style="left:2929px;top:495px;height:58px"></div>
<div class="t" style="left:1868px;top:507px;font-size:26.900px;color:#444">Номер</div>
<div class="t" style="left:2221px;top:507px;font-size:26.900px;color:#444">Дата отгрузки</div>
<div class="t" style="left:2574px;top:507px;font-size:26.900px;color:#444">Склад ЛК</div>
<div class="a" style="left:2947px;top:507px;width:196px;height:32px;overflow:hidden"><div class="t" style="left:0;top:0;color:#444">Служба доставки</div></div>
<svg class="a" style="left:2162px;top:512px" width="14" height="22" viewBox="0 0 14 22" fill="none" stroke="#3a3a3a" stroke-width="2"><path d="M7 1v18"/><path d="M2 14.500l5 5.500 5-5.500" /></svg>
<svg class="a" style="left:2515px;top:512px" width="14" height="22" viewBox="0 0 14 22" fill="none" stroke="#3a3a3a" stroke-width="2"><path d="M7 1v18"/><path d="M2 14.500l5 5.500 5-5.500" /></svg>
<svg class="a" style="left:1869px;top:861px" width="10" height="12" viewBox="0 0 10 12"><path d="M9 .5v11l-8.500-5.500z" fill="#c9c9c9"/></svg>
<div class="sbtrack" style="left:1898px;top:859px;width:1199px"></div>
<div class="sbthumb" style="left:1898px;top:859px;width:851px"></div>
<svg class="a" style="left:3116px;top:861px" width="10" height="12" viewBox="0 0 10 12"><path d="M1 .5v11l8.500-5.500z" fill="#444"/></svg>
<!-- horizontal splitter -->
<div class="a" style="left:1851px;top:891px;width:1293px;height:1px;background:repeating-linear-gradient(90deg,#d6d6d6 0,#d6d6d6 5px,transparent 5px,transparent 8px)"></div>
<!-- lower toolbar -->
<div class="btn dis" style="left:1851px;top:900px;width:60px"></div>
<div class="btn dis" style="left:1929px;top:900px;width:60px"></div>
<div class="btn dis" style="left:2007px;top:900px;width:184px"></div>
<div class="btn dis" style="left:2209px;top:900px;width:358px"></div>
<div class="btn dis" style="left:3084px;top:900px;width:60px"></div>
<svg class="a" style="left:1867px;top:913px" width="26" height="26" viewBox="0 0 26 26" fill="none" stroke="#9eabb6"><circle cx="11" cy="10.500" r="7.800" stroke-width="3"/><path d="M16.500 16l7 7" stroke-width="4.200"/></svg>
<svg class="a" style="left:1942px;top:913px" width="30" height="28" viewBox="0 0 30 28" fill="none"><circle cx="16" cy="10.500" r="7.800" stroke="#9eabb6" stroke-width="3"/><path d="M21.500 16l6.500 6.500" stroke="#9eabb6" stroke-width="4"/><path d="M3.500 14.500l9 9M12.500 14.500l-9 9" stroke="#b99c9c" stroke-width="4.200"/></svg>
<svg class="a" style="left:2023px;top:912px" width="28" height="28" viewBox="0 0 28 28"><path d="M6 0h11l4 4.500v8h-15z" fill="#d2d2d2" stroke="#a9b0b8" stroke-width="1"/><rect x="0" y="10" width="28" height="13" rx="2.500" fill="#9aa5b5"/><rect x="3" y="14" width="22" height="1.500" fill="#b9c1cd"/><rect x="6" y="17" width="16" height="11" fill="#d6d6d6" stroke="#a9b0b8" stroke-width="1"/><rect x="18" y="11.800" width="2" height="1.600" fill="#dfe4ea"/><rect x="22" y="11.800" width="2" height="1.600" fill="#dfe4ea"/></svg>
<div class="t" style="left:2068px;top:910px;color:#8c8c8c">Печать</div>
<svg class="a" style="left:2167px;top:925px" width="10" height="6" viewBox="0 0 10 6"><path d="M0 0h10l-5 5.500z" fill="#8c8c8c"/></svg>
<svg class="a" style="left:2224px;top:916px" width="31" height="21" viewBox="0 0 31 21"><rect x="0" y="0" width="19" height="14" fill="#bdbdbd"/><path d="M20 4h5.500l4.500 5v5.500h-10z" fill="#b9a8a5"/><rect x="0" y="14" width="30" height="2.500" fill="#b3b3b3"/><circle cx="6" cy="16" r="4.300" fill="#e2e2e2"/><circle cx="6" cy="16" r="2.300" fill="#a8a8a8"/><circle cx="24" cy="16" r="4.300" fill="#e2e2e2"/><circle cx="24" cy="16" r="2.300" fill="#a8a8a8"/></svg>
<div class="t" style="left:2270px;top:910px;color:#8c8c8c">Передать в доставку</div>
<svg class="a" style="left:2542px;top:925px" width="10" height="6" viewBox="0 0 10 6"><path d="M0 0h10l-5 5.500z" fill="#8c8c8c"/></svg>
<svg class="a" style="left:3100px;top:912px" width="28" height="28" viewBox="0 0 28 28" fill="none"><path d="M22.300 18.500a10 10 0 1 1-1.300-10.800" stroke="#a5bfa7" stroke-width="3.200"/><path d="M26 2.500v10.500h-10.500z" fill="#a5bfa7"/></svg>
<!-- lower grid -->
<div class="grid" style="left:1851px;top:971px;width:1293px;height:899px"></div>
<div class="hd" style="left:1853px;top:973px;width:1289px;height:117px"></div>
<div class="hl" style="left:1852px;top:1090px;width:1291px"></div>
<div class="vl" style="left:2223px;top:973px;height:118px"></div>
<div class="vl" style="left:2393px;top:973px;height:118px"></div>
<div class="vl" style="left:2538px;top:973px;height:118px"></div>
<div class="vl" style="left:2816px;top:973px;height:118px"></div>
<div class="vl" style="left:3085px;top:973px;height:118px"></div>
<div class="vl" style="left:2682px;top:1031px;height:60px"></div>
<div class="hl" style="left:2541px;top:1029px;width:275px"></div>
<div class="hl" style="left:3088px;top:1029px;width:55px"></div>
<div class="t" style="left:1868px;top:985px;font-size:26.900px;color:#444">Заказ</div>
<svg class="a" style="left:2182px;top:990px" width="14" height="22" viewBox="0 0 14 22" fill="none" stroke="#3a3a3a" stroke-width="2"><path d="M7 1v18"/><path d="M2 14.500l5 5.500 5-5.500" /></svg>
<div class="t" style="left:2241px;top:985px;font-size:26.900px;color:#444">Проверено</div>
<div class="t" style="left:2411px;top:985px;font-size:26.900px;color:#444">Отменен</div>
<div class="t" style="left:2557px;top:985px;font-size:26.900px;color:#444">Включен в отгруз…</div>
<div class="t" style="left:2834px;top:985px;font-size:26.900px;color:#444">Этикетка доступна</div>
<div class="a" style="left:3107px;top:985px;width:36px;height:32px;overflow:hidden"><div class="t" style="left:0;top:0;color:#444">Распечатано</div></div>
<div class="t" style="left:2563px;top:1045px;font-size:26.900px;color:#444">Ус…</div>
<svg class="a" style="left:2642px;top:1049px" width="14" height="22" viewBox="0 0 14 22" fill="none" stroke="#3a3a3a" stroke-width="2"><path d="M7 1v18"/><path d="M2 14.500l5 5.500 5-5.500" /></svg>
<div class="t" style="left:2706px;top:1045px;font-size:26.900px;color:#444">О…</div>
<svg class="a" style="left:2775px;top:1049px" width="14" height="22" viewBox="0 0 14 22" fill="none" stroke="#3a3a3a" stroke-width="2"><path d="M7 21v-18"/><path d="M2 7.500l5-5.500 5 5.500" /></svg>
<div class="a" style="left:3103px;top:1045px;width:40px;height:32px;overflow:hidden"><div class="t" style="left:0;top:0;color:#444">Заказ</div></div>
<svg class="a" style="left:1869px;top:1849px" width="10" height="12" viewBox="0 0 10 12"><path d="M9 .5v11l-8.500-5.500z" fill="#c9c9c9"/></svg>
<div class="sbtrack" style="left:1898px;top:1847px;width:1199px"></div>
<div class="sbthumb" style="left:1898px;top:1847px;width:1021px"></div>
<svg class="a" style="left:3116px;top:1849px" width="10" height="12" viewBox="0 0 10 12"><path d="M1 .5v11l8.500-5.500z" fill="#444"/></svg>

</body>
</html>
